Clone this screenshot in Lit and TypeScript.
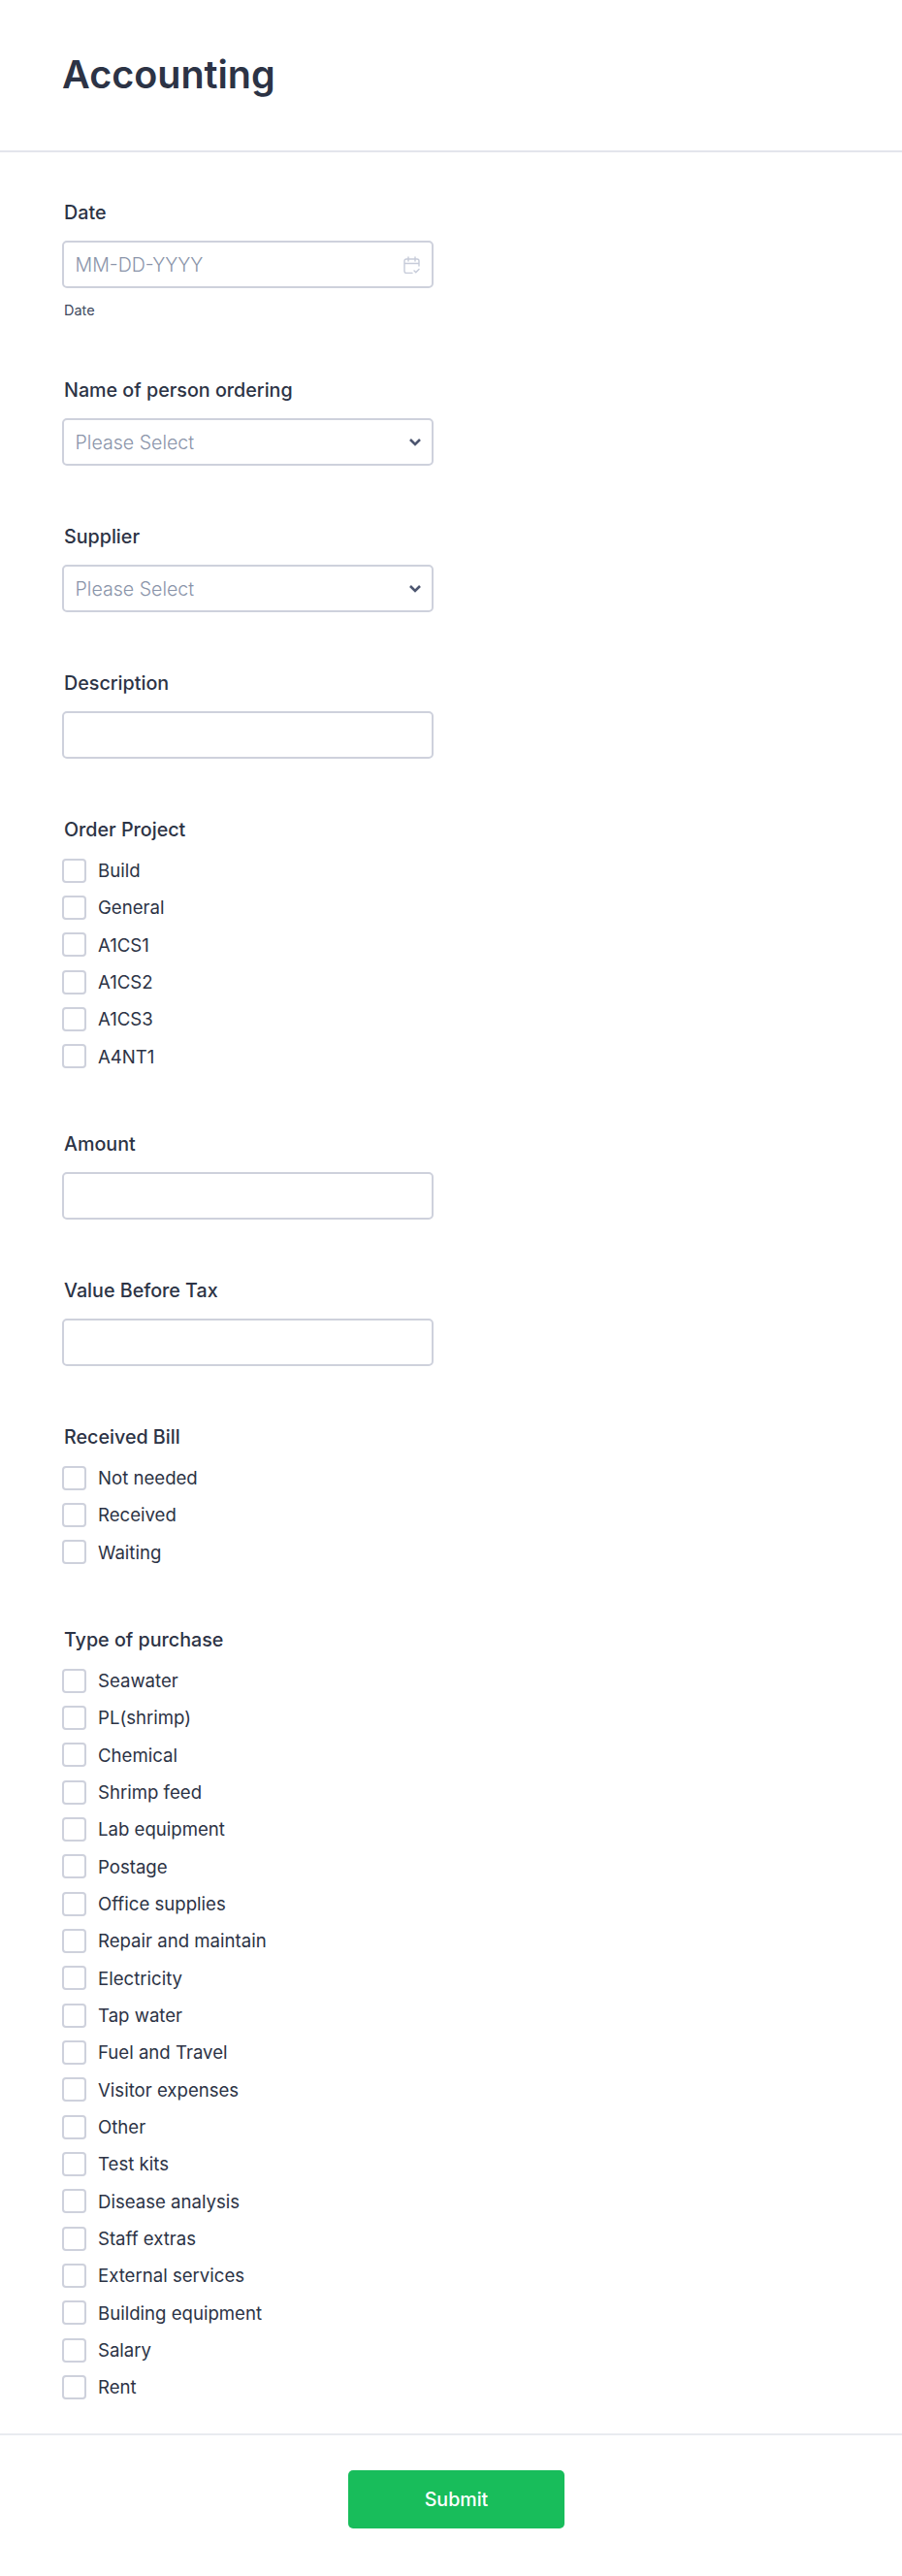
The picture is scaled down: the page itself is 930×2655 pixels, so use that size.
import { LitElement, html, css } from "lit";
import { customElement } from "lit/decorators.js";

const project = ["Build","General","A1CS1","A1CS2","A1CS3","A4NT1"];
const bill = ["Not needed","Received","Waiting"];
const purchase = ["Seawater","PL(shrimp)","Chemical","Shrimp feed","Lab equipment","Postage","Office supplies","Repair and maintain","Electricity","Tap water","Fuel and Travel","Visitor expenses","Other","Test kits","Disease analysis","Staff extras","External services","Building equipment","Salary","Rent"];

@customElement("app-root")
export class AppRoot extends LitElement {
  static styles = css`
    :host { display: block; background: #fff; font-family: Inter, sans-serif; color: #2c3345; height: 2655px; overflow: hidden; }
    .head { height: 157px; box-sizing: border-box; padding: 52px 64px 0; border-bottom: 2px solid #e3e5ec; }
    h1 { margin: 0; font-size: 39.5px; line-height: 50px; font-weight: 600; color: #2c3345; }
    form { padding: 50px 64px 28px; box-sizing: border-box; border-bottom: 2px solid #e9ebf0; }
    .field { display: flex; flex-direction: column; align-items: flex-start; margin-bottom: 61px; }
    .group { margin-bottom: 59px; }
    .field:last-child { margin-bottom: 0; }
    .label { font-size: 19.7px; line-height: 24px; font-weight: 500; margin: 0 0 17px 2px; color: #2c3345; }
    .group .label { margin-bottom: 11px; }
    .input { width: 383px; height: 49px; box-sizing: border-box; border: 2px solid #ced1dc; border-radius: 5px; padding: 0 12px 0 11.5px; display: flex; align-items: center; justify-content: space-between; font-size: 19.6px; font-weight: 300; color: #8a94a9; background: #fff; }
    .sub { font-size: 14.5px; line-height: 18px; margin-top: 14px; margin-left: 2px; color: #414a60; }
    .check { display: flex; align-items: center; height: 38.33px; gap: 12px; font-size: 18.6px; color: #2c3345; }
    .box { width: 25px; height: 25px; box-sizing: border-box; border: 2px solid #ced1dc; border-radius: 4px; background: #fff; }
    .foot { display: flex; justify-content: center; padding: 36px 0 0 11px; }
    .submit { width: 223px; height: 60px; border: 0; border-radius: 5px; background: #18bd5b; color: #fff; font: 500 19.6px Inter, sans-serif; }
    .chevron { display: block; margin-right: -2px; }
  `;
  private checks(items: string[]) {
    return items.map((t) => html`<div class="check"><span class="box"></span><span>${t}</span></div>`);
  }
  private chevron() {
    return html`<svg class="chevron" width="14" height="10" viewBox="0 0 14 10" fill="none" stroke="#4d5670" stroke-width="2.6"><path d="M2 2l5 5 5-5"/></svg>`;
  }
  render() {
    return html`
      <div class="head"><h1>Accounting</h1></div>
      <form>
        <div class="field"><div class="label">Date</div>
          <div class="input"><span>MM-DD-YYYY</span>
            <svg width="17" height="18" viewBox="0 0 17 18" fill="none" stroke="#c6cbd9" stroke-width="1.4" stroke-linecap="round"><path d="M16 10V5a2 2 0 0 0-2-2H3a2 2 0 0 0-2 2v10.500a2 2 0 0 0 2 2h6M1 7.500h15M5 1v4M12 1v4M11 15l1.800 1.800L16 13.500"/></svg>
          </div>
          <div class="sub">Date</div></div>
        <div class="field"><div class="label">Name of person ordering</div><div class="input"><span>Please Select</span>${this.chevron()}</div></div>
        <div class="field"><div class="label">Supplier</div><div class="input"><span>Please Select</span>${this.chevron()}</div></div>
        <div class="field"><div class="label">Description</div><div class="input"></div></div>
        <div class="field group"><div class="label">Order Project</div>${this.checks(project)}</div>
        <div class="field"><div class="label">Amount</div><div class="input"></div></div>
        <div class="field"><div class="label">Value Before Tax</div><div class="input"></div></div>
        <div class="field group"><div class="label">Received Bill</div>${this.checks(bill)}</div>
        <div class="field group"><div class="label">Type of purchase</div>${this.checks(purchase)}</div>
      </form>
      <div class="foot"><button class="submit">Submit</button></div>
    `;
  }
}
